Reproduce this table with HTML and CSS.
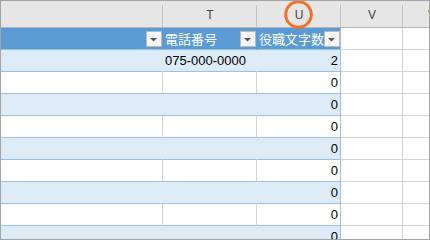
FILE: index.html
```html
<!DOCTYPE html>
<html lang="ja">
<head>
<meta charset="utf-8">
<title>Sheet</title>
<link rel="stylesheet" href="styles.css">
</head>
<body>
<div class="sheet">
  <div class="colheads">
    <div class="ch"></div>
    <div class="ch">T</div>
    <div class="ch">U<svg class="mark" width="29" height="29" viewBox="0 0 29 29"><circle cx="14.5" cy="14.5" r="12.8" fill="none" stroke="#f0722a" stroke-width="3"/></svg></div>
    <div class="ch">V</div>
    <div class="ch">W</div>
  </div>

  <div class="row hdr">
    <div class="cell t-s"><span class="lbl"></span><span class="fb"><svg width="14" height="14" viewBox="0 0 14 14"><polygon points="3,6 10,6 6.5,9.5" fill="#555"/></svg></span></div>
    <div class="cell t-t"><span class="lbl">電話番号</span><span class="fb"><svg width="14" height="14" viewBox="0 0 14 14"><polygon points="3,6 10,6 6.5,9.5" fill="#555"/></svg></span></div>
    <div class="cell t-u"><span class="lbl">役職文字数</span><span class="fb"><svg width="14" height="14" viewBox="0 0 14 14"><polygon points="3,6 10,6 6.5,9.5" fill="#555"/></svg></span></div>
    <div class="cell"></div>
    <div class="cell"></div>
  </div>

  <div class="row band">
    <div class="cell t-s"></div>
    <div class="cell t-t">075-000-0000</div>
    <div class="cell t-u num">2</div>
    <div class="cell"></div>
    <div class="cell"></div>
  </div>
  <div class="row">
    <div class="cell t-s"></div>
    <div class="cell t-t"></div>
    <div class="cell t-u num">0</div>
    <div class="cell"></div>
    <div class="cell"></div>
  </div>
  <div class="row band">
    <div class="cell t-s"></div>
    <div class="cell t-t"></div>
    <div class="cell t-u num">0</div>
    <div class="cell"></div>
    <div class="cell"></div>
  </div>
  <div class="row">
    <div class="cell t-s"></div>
    <div class="cell t-t"></div>
    <div class="cell t-u num">0</div>
    <div class="cell"></div>
    <div class="cell"></div>
  </div>
  <div class="row band">
    <div class="cell t-s"></div>
    <div class="cell t-t"></div>
    <div class="cell t-u num">0</div>
    <div class="cell"></div>
    <div class="cell"></div>
  </div>
  <div class="row">
    <div class="cell t-s"></div>
    <div class="cell t-t"></div>
    <div class="cell t-u num">0</div>
    <div class="cell"></div>
    <div class="cell"></div>
  </div>
  <div class="row band">
    <div class="cell t-s"></div>
    <div class="cell t-t"></div>
    <div class="cell t-u num">0</div>
    <div class="cell"></div>
    <div class="cell"></div>
  </div>
  <div class="row">
    <div class="cell t-s"></div>
    <div class="cell t-t"></div>
    <div class="cell t-u num">0</div>
    <div class="cell"></div>
    <div class="cell"></div>
  </div>
  <div class="row band">
    <div class="cell t-s"></div>
    <div class="cell t-t"></div>
    <div class="cell t-u num">0</div>
    <div class="cell"></div>
    <div class="cell"></div>
  </div>
</div>
</body>
</html>
```

FILE: styles.css
```css
* {
  box-sizing: border-box;
}

body {
  margin: 0;
  background: #fff;
}

.sheet {
  width: 430px;
  height: 240px;
  border: 1px solid #a3a3a3;
  overflow: hidden;
  background: #fff;
  font-family: "Liberation Sans", Arial, sans-serif;
}

.colheads,
.row {
  display: grid;
  grid-template-columns: 162px 94px 84px 62px 62px;
}

.colheads {
  height: 27px;
  background: #e6e6e6;
  border-bottom: 1px solid #b5b5b5;
}

.ch {
  position: relative;
  text-align: center;
  font-size: 12px;
  color: #444;
  padding-top: 3px;
  line-height: 23px;
  background: linear-gradient(#c2c2c2, #c2c2c2) right bottom / 1px 22px no-repeat;
}

.mark {
  position: absolute;
  left: 27px;
  top: -1px;
}

.row {
  height: 22px;
}

.cell {
  border-right: 1px solid #d4d4d4;
  border-bottom: 1px solid #d4d4d4;
  font-size: 13px;
  line-height: 21px;
  padding: 0 2px;
  white-space: nowrap;
  overflow: hidden;
  color: #000;
}

.num {
  text-align: right;
}

.row .t-s,
.row .t-t,
.row .t-u {
  border-bottom-color: #9bc2e6;
}

.row .t-u {
  border-right-color: #9bc2e6;
}

.band .t-s,
.band .t-t,
.band .t-u {
  background: #ddebf7;
}

.band .t-s,
.band .t-t {
  border-right-color: #ddebf7;
}

.hdr .t-s,
.hdr .t-t,
.hdr .t-u {
  display: flex;
  align-items: center;
  justify-content: space-between;
  background: #5b9bd5;
  color: #fff;
  border-right-color: #5b9bd5;
  padding: 0 0 0 2px;
  font-family: "Noto Sans CJK JP", "Liberation Sans", sans-serif;
}

.hdr .t-u {
  border-right-color: #9bc2e6;
  padding-right: 1px;
}

.lbl {
  line-height: 21px;
}

.fb {
  flex: none;
  width: 16px;
  height: 16px;
  margin-top: 1px;
  border: 1px solid #b9b9b9;
  background: #f6f6f6;
  display: flex;
}
```
